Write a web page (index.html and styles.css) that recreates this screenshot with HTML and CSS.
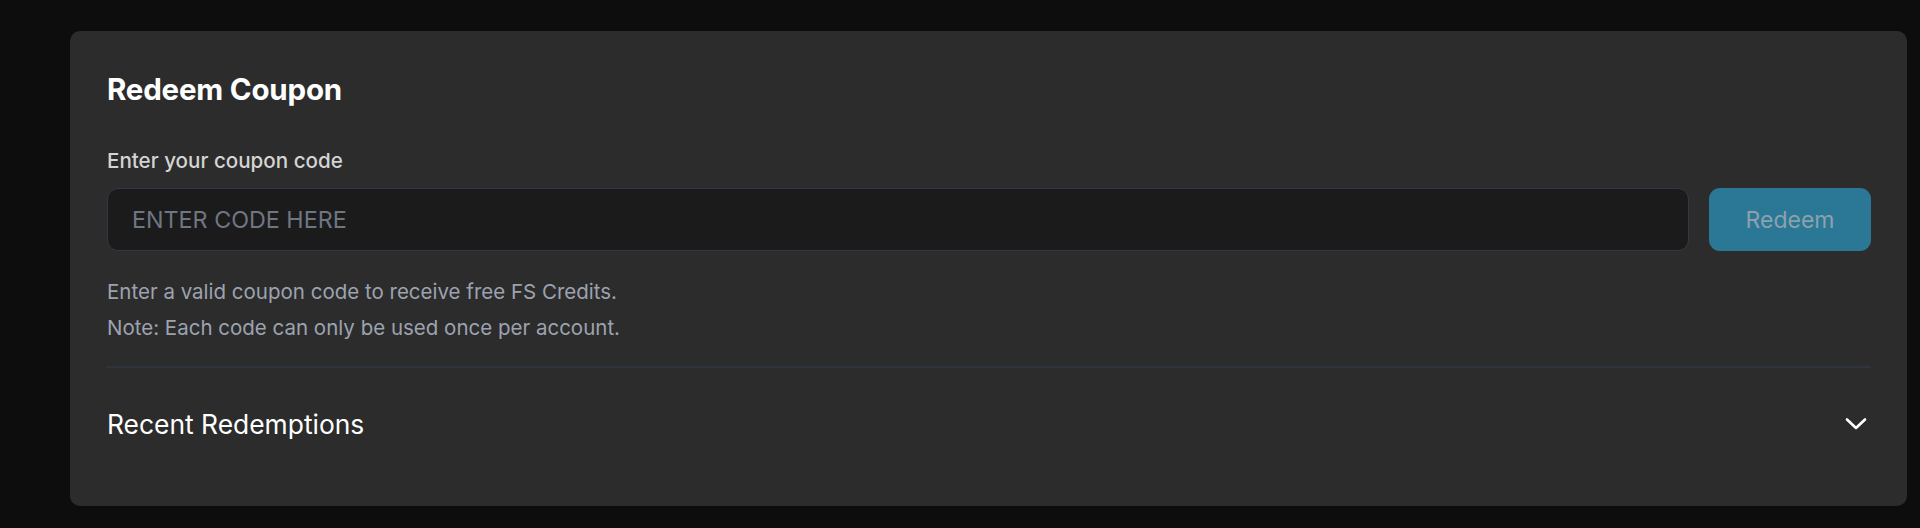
FILE: index.html
```html
<!DOCTYPE html>
<html lang="en">
<head>
<meta charset="utf-8">
<title>Redeem Coupon</title>
<link rel="stylesheet" href="styles.css">
</head>
<body>
<div class="card">
  <h2 class="title">Redeem Coupon</h2>
  <label class="label" for="code">Enter your coupon code</label>
  <div class="row">
    <input id="code" class="input" type="text" placeholder="ENTER CODE HERE">
    <button class="btn" type="button">Redeem</button>
  </div>
  <div class="help">
    <p>Enter a valid coupon code to receive free FS Credits.</p>
    <p>Note: Each code can only be used once per account.</p>
  </div>
  <div class="divider"></div>
  <div class="recent">
    <span class="recent-title">Recent Redemptions</span>
    <svg class="chev" width="24" height="14" viewBox="0 0 24 14" fill="none">
      <path d="M3 2.5 L12 11 L21 2.5" stroke="#ffffff" stroke-width="2.6" stroke-linecap="round" stroke-linejoin="round"/>
    </svg>
  </div>
</div>
</body>
</html>
```

FILE: styles.css
```css
html, body {
  margin: 0;
  padding: 0;
  background: #0d0d0d;
  height: 528px;
  overflow: hidden;
}
body {
  font-family: Inter, "Noto Sans", sans-serif;
  padding: 31px 13px 0 70px;
  box-sizing: border-box;
}
.card {
  background: #2c2c2c;
  border-radius: 10px;
  height: 475px;
  box-sizing: border-box;
  padding: 40px 36px 0 37px;
  display: flex;
  flex-direction: column;
}
.title {
  margin: 0;
  font-size: 29.5px;
  line-height: 36px;
  font-weight: 700;
  color: #ffffff;
  letter-spacing: -0.2px;
}
.label {
  display: block;
  margin-top: 39px;
  font-size: 20.6px;
  line-height: 30px;
  font-weight: 500;
  color: #d4d4d4;
}
.row {
  display: flex;
  gap: 20px;
  margin-top: 12px;
}
.input {
  flex: 1;
  height: 63px;
  box-sizing: border-box;
  background: #1b1b1b;
  border: 1.5px solid #323846;
  border-radius: 11px;
  padding: 0 24px;
  font-family: inherit;
  font-size: 23.3px;
  color: #e5e5e5;
  outline: none;
}
.input::placeholder {
  color: #6f7682;
}
.btn {
  width: 162px;
  height: 63px;
  border: none;
  border-radius: 11px;
  background: #2b7896;
  color: #8ca1ac;
  font-family: inherit;
  font-size: 23px;
  font-weight: 400;
}
.help {
  margin-top: 23px;
}
.help p {
  margin: 0;
  font-size: 20.5px;
  line-height: 36px;
  color: #9ca3af;
}
.divider {
  margin-top: 20px;
  height: 2px;
  background: #2e3441;
}
.recent {
  margin-top: 36px;
  display: flex;
  align-items: center;
  justify-content: space-between;
  height: 40px;
}
.recent-title {
  font-size: 26.4px;
  line-height: 40px;
  font-weight: 400;
  color: #ffffff;
}
.chev {
  margin-right: 3px;
}
```
